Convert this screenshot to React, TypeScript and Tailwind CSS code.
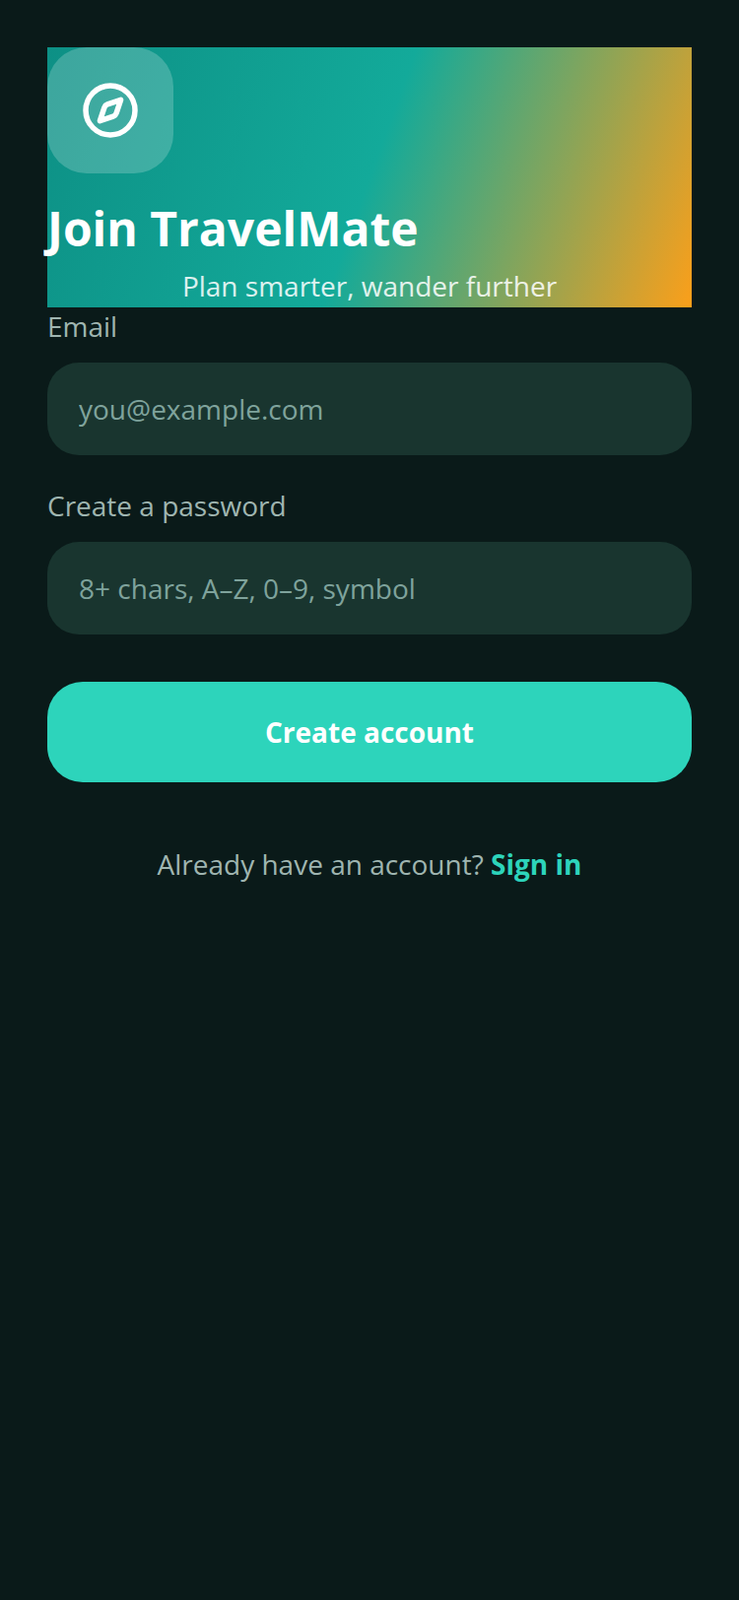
import { Compass } from 'lucide-react'

const font = "font-['Open_Sans',sans-serif]"

function Field({ label, placeholder, type }: { label: string; placeholder: string; type: string }) {
  return (
    <div>
      <label className="block text-[28px] leading-[38px] text-[#9fb5b0]">{label}</label>
      <input
        type={type}
        placeholder={placeholder}
        className="mt-[18px] block h-[94px] w-full rounded-[32px] bg-[#19352f] px-8 text-[28px] text-white outline-none placeholder:text-[#7fa39c]"
      />
    </div>
  )
}

export default function App() {
  return (
    <div className={`${font} min-h-[1624px] bg-[#0a1a19] p-12`}>
      {/* Header */}
      <div className="h-[264px] bg-[linear-gradient(110deg,#0d9085_0%,#13aa9a_50%,#fb9f1a_100%)]">
        <div className="flex h-32 w-32 items-center justify-center rounded-[40px] bg-white/20">
          <Compass size={60} strokeWidth={2.2} className="text-white" />
        </div>
        <h1 className="mt-6 text-[48px] leading-[64px] font-bold text-white">Join TravelMate</h1>
        <p className="mt-[7px] text-center text-[28px] leading-[38px] text-white/85">Plan smarter, wander further</p>
      </div>

      {/* Form */}
      <Field label="Email" placeholder="you@example.com" type="email" />
      <div className="mt-8">
        <Field label="Create a password" placeholder="8+ chars, A–Z, 0–9, symbol" type="password" />
      </div>

      <button className="mt-12 flex h-[102px] w-full items-center justify-center rounded-[36px] bg-[#2dd4bb] text-[28px] font-bold text-white">
        Create account
      </button>

      <p className="mt-16 text-center text-[28px] leading-[38px] text-[#9fb5b0]">
        Already have an account? <span className="font-bold text-[#2dd4bb]">Sign in</span>
      </p>
    </div>
  )
}
